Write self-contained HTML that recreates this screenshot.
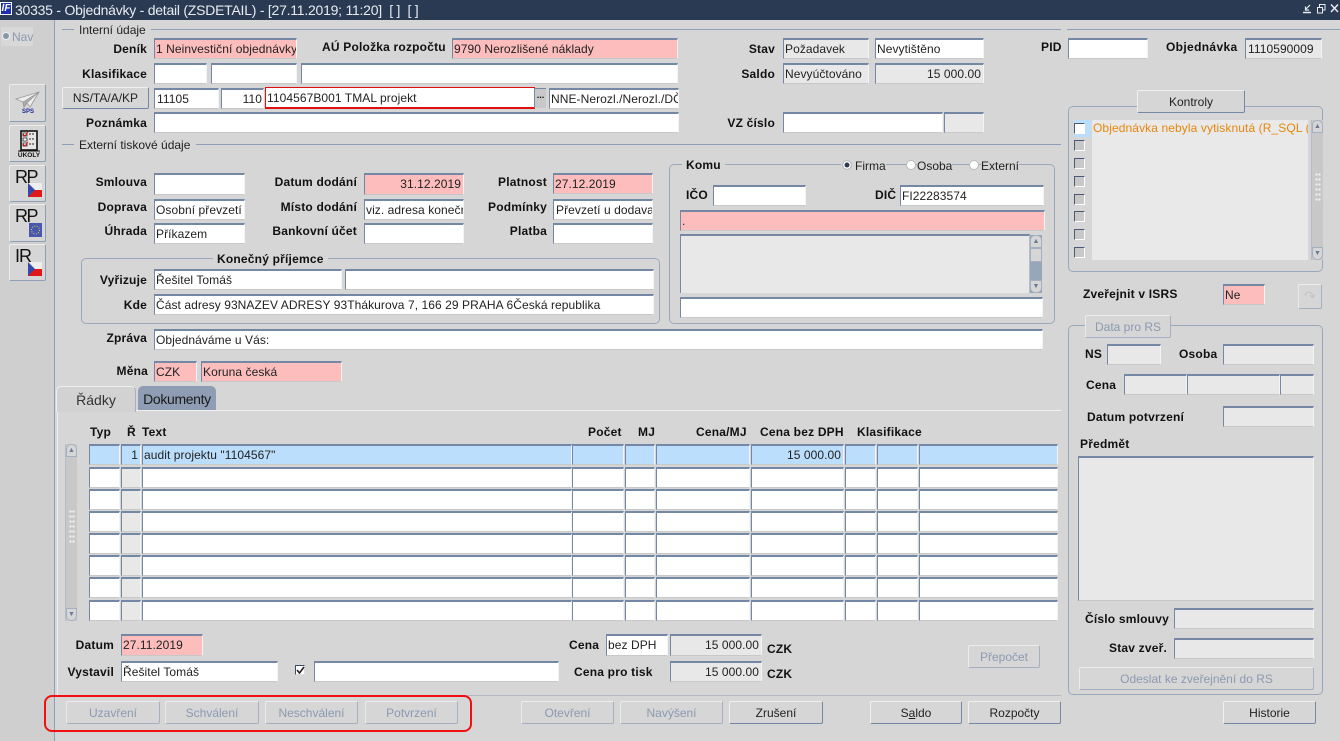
<!DOCTYPE html>
<html lang="cs"><head><meta charset="utf-8"><title>Objednávky</title>
<style>
html,body{margin:0;padding:0}
body{position:relative;width:1340px;height:741px;overflow:hidden;background:#d6d6d6;font:12px "Liberation Sans",sans-serif;color:#111}
body div,body span.a{position:absolute;box-sizing:border-box;white-space:nowrap}
.f{border:1px solid;border-color:#7488a6 #f4f4f4 #c8c8c8 #7488a6;border-top-width:2px;background:#fff;overflow:hidden;padding:0 2px 0 1px;height:21px;line-height:18px;font-size:12px;color:#222;letter-spacing:.07px}
.p{background:#fdbdbd}.g{background:#e8e8e8}.b{background:#bbdefc}.n{text-align:right}
.l{font-weight:bold;font-size:12px;color:#111;line-height:14px;letter-spacing:.2px}
.r{left:0;text-align:right}
.btn{border:1px solid;border-color:#f0f0f0 #7488a6 #7488a6 #f0f0f0;border-radius:2px;background:#d6d6d6;text-align:center;font-size:12px;color:#222;line-height:22px;height:23px}
.d{color:#8b9ab0;border-color:#ececec #a4b0c2 #a4b0c2 #ececec}
.ln{height:1px;background:#8e9eb6}
.fs{border:1px solid #9aa8bc;border-radius:5px}
.bg{background:#d6d6d6;padding:0 4px}
.ic{left:9px;width:37px;border:1px solid;border-color:#ececec #8e9eb6 #8e9eb6 #ececec;border-radius:2px;background:#d6d6d6}
.ck{left:1074px;width:11px;height:11px;border:1px solid;border-color:#4a5a74 #fff #fff #4a5a74;background:#c8c8c8}
.rd{width:10px;height:10px;border-radius:50%;background:#fff;border:1px solid #bbb;top:160px}
.sb{background:#c8c8c8;border-left:1px solid #b4bcc8}
.h{top:425px}
.up,.dn{left:0;height:13px;background:#d6d6d6;border:1px solid #a4b0c2;color:#6a7a94;font-size:7px;line-height:11px;text-align:center}
.up{top:0;border-radius:5px 5px 0 0}.dn{border-radius:0 0 5px 5px}
.grip{left:3px;width:6px;background-image:radial-gradient(circle,#f2f2f2 0 1px,transparent 1.300px);background-size:3px 5px}
</style></head><body>

<!-- title bar -->
<div style="left:0;top:0;width:1340px;height:20px;background:#2a3a52"></div>
<div style="left:0;top:2px;width:12px;height:13px;background:#1c2fb0;border:1px solid #fff;color:#fff;font:italic bold 10px/11px 'Liberation Sans',sans-serif;text-align:center;overflow:hidden">ÍF</div>
<div style="left:15px;top:1px;color:#e8ecf2;font-size:14px;line-height:18px;letter-spacing:-.24px">30335 - Objednávky - detail (ZSDETAIL) - [27.11.2019; 11:20]&nbsp; [ ]&nbsp; [ ]</div>
<svg style="position:absolute;left:1302px;top:2px" width="38" height="12" viewBox="0 0 38 12" fill="none" stroke="#e8ecf2"><path d="M1 10.500h8" stroke-width="1.500"/><path d="M8 3L4 7M3.500 4.500V8H7" stroke-width="1.200"/><path d="M15.500 5.500h5v5.500h-5z"/><path d="M17.500 5V2.500h5.500V8h-2.500"/><path d="M29 2.500l7 7.500M36 2.500l-7 7.500" stroke-width="1.500"/></svg>

<!-- left bar -->
<div style="left:0;top:20px;width:54px;height:721px;background:#cfcfcf"></div>
<div style="left:54px;top:20px;width:1px;height:721px;background:#8e9eb6"></div>
<div style="left:1px;top:27px;width:32px;height:19px;background:#d8d8d8"></div>
<div style="left:2px;top:32px;width:8px;height:8px;border-radius:50%;background:#8896a8;border:1px solid #eee"></div>
<div style="left:12px;top:29px;color:#8b9ab0;font-size:12px;line-height:16px">Nav</div>

<div class="ic" style="top:84px;height:38px"><svg style="position:absolute;left:5px;top:5px" width="26" height="28" viewBox="0 0 26 28"><path d="M1 9L24 2 15 17 12 13 9 17 8 12z" fill="#eee" stroke="#999" stroke-width=".8"/><path d="M8 12L24 2 12 13 9 17z" fill="#aaa" stroke="#888" stroke-width=".5"/><text x="13" y="23" font-family="Liberation Sans" font-size="6" font-weight="bold" fill="#1c2a90" text-anchor="middle">SPS</text></svg></div>
<div class="ic" style="top:125px;height:37px"><svg style="position:absolute;left:5px;top:3px" width="28" height="30" viewBox="0 0 28 30"><rect x="6" y="2" width="16" height="19" fill="#e6e6e6" stroke="#111" stroke-width="1.600"/><path d="M8 4h4v3H8zM8 9h4v3H8zM8 14h4v3H8z" fill="#fff" stroke="#222" stroke-width=".8"/><path d="M8 5l2 2 3-4M8 15l2 2 3-4" stroke="#d11" fill="none"/><path d="M14 5h6M14 10h6M14 15h6" stroke="#222" stroke-dasharray="2 1"/><path d="M3 22h22" stroke="#111"/><text x="14" y="28" font-family="Liberation Sans" font-size="6.500" font-weight="bold" fill="#111" text-anchor="middle">ÚKOLY</text></svg></div>
<div class="ic" style="top:165px;height:37px"><span class="a" style="left:5px;top:1px;font-size:18px;line-height:20px;color:#111;letter-spacing:-1.500px">RP</span><svg style="position:absolute;left:18px;top:17px" width="14" height="14"><rect width="14" height="7" fill="#eee"/><rect y="7" width="14" height="7" fill="#e01818"/><path d="M0 0L7 7 0 14z" fill="#3848a8"/></svg></div>
<div class="ic" style="top:204px;height:38px"><span class="a" style="left:5px;top:1px;font-size:18px;line-height:20px;color:#111;letter-spacing:-1.500px">RP</span><svg style="position:absolute;left:19px;top:18px" width="13" height="14"><rect width="13" height="14" fill="#4858b0"/><circle cx="6.500" cy="7" r="4" fill="none" stroke="#e8d838" stroke-dasharray="1 1.500"/></svg></div>
<div class="ic" style="top:244px;height:37px"><span class="a" style="left:5px;top:1px;font-size:18px;line-height:20px;color:#111;letter-spacing:-1px">IR</span><svg style="position:absolute;left:18px;top:17px" width="14" height="14"><rect width="14" height="7" fill="#eee"/><rect y="7" width="14" height="7" fill="#e01818"/><path d="M0 0L7 7 0 14z" fill="#3848a8"/></svg></div>

<!-- section lines -->
<div class="ln" style="left:62px;top:29px;width:12px"></div>
<div style="left:79px;top:23px;line-height:14px;color:#222">Interní údaje</div>
<div class="ln" style="left:151px;top:29px;width:910px"></div>
<div class="ln" style="left:1067px;top:29px;width:273px"></div>
<div class="ln" style="left:62px;top:144px;width:12px"></div>
<div style="left:79px;top:138px;line-height:14px;color:#222">Externí tiskové údaje</div>
<div class="ln" style="left:196px;top:144px;width:865px"></div>

<!-- interní -->
<div class="l r" style="top:42px;width:147px">Deník</div>
<div class="f p" style="left:154px;top:38px;width:143px">1 Neinvestiční objednávky</div>
<div class="l" style="left:322px;top:40px">AÚ Položka rozpočtu</div>
<div class="f p" style="left:452px;top:38px;width:226px">9790 Nerozlišené náklady</div>
<div class="l r" style="top:67px;width:147px">Klasifikace</div>
<div class="f" style="left:154px;top:63px;width:53px"></div>
<div class="f" style="left:211px;top:63px;width:86px"></div>
<div class="f" style="left:301px;top:63px;width:377px"></div>
<div class="btn" style="left:62px;top:87px;width:87px;height:22px;line-height:21px">NS/TA/A/KP</div>
<div class="f" style="left:154px;top:88px;width:65px;padding-left:2px">11105</div>
<div class="f n" style="left:221px;top:88px;width:43px;padding-right:1px">110</div>
<div class="f" style="left:265px;top:87px;width:270px;height:22px;border:1px solid #e01010;border-right:0;border-bottom-width:2px;line-height:21px">1104567B001 TMAL projekt</div>
<div style="left:534px;top:88px;width:12px;height:20px;background:#c8c8c8;border-left:1px solid #7488a6;border-top:1px solid #7488a6;text-align:center;font:bold 9px/12px 'Liberation Sans',sans-serif">...</div>
<div class="f" style="left:549px;top:88px;width:130px">NNE-Nerozl./Nerozl./DČ-</div>
<div class="l r" style="top:116px;width:147px">Poznámka</div>
<div class="f" style="left:154px;top:112px;width:525px"></div>

<div class="l r" style="top:42px;width:775px">Stav</div>
<div class="f g" style="left:783px;top:38px;width:86px">Požadavek</div>
<div class="f" style="left:875px;top:38px;width:109px">Nevytištěno</div>
<div class="l r" style="top:67px;width:775px">Saldo</div>
<div class="f g" style="left:783px;top:63px;width:86px">Nevyúčtováno</div>
<div class="f g n" style="left:875px;top:63px;width:109px">15 000.00</div>
<div class="l r" style="top:116px;width:775px">VZ číslo</div>
<div class="f" style="left:783px;top:112px;width:160px"></div>
<div class="f g" style="left:944px;top:112px;width:40px"></div>
<div class="l" style="left:1041px;top:40px">PID</div>
<div class="f" style="left:1068px;top:38px;width:80px"></div>
<div class="l" style="left:1166px;top:40px;letter-spacing:.35px">Objednávka</div>
<div class="f g" style="left:1245px;top:38px;width:77px;padding:0 1px 0 2px">1110590009</div>

<!-- kontroly -->
<div class="fs" style="left:1068px;top:106px;width:255px;height:166px"></div>
<div class="btn" style="left:1137px;top:90px;width:108px;height:23px">Kontroly</div>
<div style="left:1074px;top:120px;width:17px;height:17px;background:#bbdefc"></div>
<div class="ck" style="top:123px;background:#fff"></div>
<div class="ck" style="top:140px"></div><div class="ck" style="top:158px"></div><div class="ck" style="top:176px"></div><div class="ck" style="top:194px"></div><div class="ck" style="top:211px"></div><div class="ck" style="top:229px"></div><div class="ck" style="top:247px"></div>
<div style="left:1092px;top:120px;width:216px;height:140px;background:#e9e9e9;color:#e8860c;padding-left:1px;line-height:17px;overflow:hidden;letter-spacing:.1px">Objednávka nebyla vytisknutá (R_SQL (</div>
<div class="sb" style="left:1311px;top:120px;width:12px;height:140px"><div class="up" style="width:11px">▲</div><div class="dn" style="width:11px;top:127px">▼</div><div class="grip" style="top:52px;height:30px"></div></div>

<!-- externí -->
<div class="l r" style="top:175px;width:147px">Smlouva</div>
<div class="f" style="left:154px;top:173px;width:91px;height:22px"></div>
<div class="l r" style="top:200px;width:147px">Doprava</div>
<div class="f" style="left:154px;top:199px;width:91px">Osobní převzetí</div>
<div class="l r" style="top:224px;width:147px">Úhrada</div>
<div class="f" style="left:154px;top:223px;width:91px">Příkazem</div>
<div class="l r" style="top:175px;width:357px">Datum dodání</div>
<div class="f p n" style="left:364px;top:173px;width:100px;height:22px;padding-right:2px">31.12.2019</div>
<div class="l r" style="top:200px;width:357px">Místo dodání</div>
<div class="f" style="left:364px;top:199px;width:100px;padding:0 0 0 1px">viz. adresa konečr</div>
<div class="l r" style="top:224px;width:357px">Bankovní účet</div>
<div class="f" style="left:364px;top:223px;width:100px"></div>
<div class="l r" style="top:175px;width:547px">Platnost</div>
<div class="f p" style="left:553px;top:173px;width:100px">27.12.2019</div>
<div class="l r" style="top:200px;width:547px">Podmínky</div>
<div class="f" style="left:553px;top:199px;width:100px;padding:0 0 0 2px">Převzetí u dodava</div>
<div class="l r" style="top:224px;width:547px">Platba</div>
<div class="f" style="left:553px;top:223px;width:100px"></div>

<div class="fs" style="left:81px;top:258px;width:579px;height:66px"></div>
<div class="l bg" style="left:213px;top:252px">Konečný příjemce</div>
<div class="l r" style="top:273px;width:147px">Vyřizuje</div>
<div class="f" style="left:154px;top:269px;width:188px">Řešitel Tomáš</div>
<div class="f" style="left:345px;top:269px;width:309px"></div>
<div class="l r" style="top:298px;width:147px">Kde</div>
<div class="f" style="left:154px;top:294px;width:500px">Část adresy 93NAZEV ADRESY 93Thákurova 7, 166 29 PRAHA 6Česká republika</div>

<!-- komu -->
<div class="fs" style="left:669px;top:164px;width:386px;height:160px"></div>
<div class="l bg" style="left:682px;top:158px">Komu</div>
<div class="bg" style="left:841px;top:158px;padding:0 1px;width:45px;height:14px"></div>
<div class="rd" style="left:842px;background:#2a3a52;box-shadow:inset 0 0 0 1.500px #fff"></div>
<div style="left:855px;top:159px;line-height:14px;color:#222;background:#d6d6d6">Firma</div>
<div class="rd" style="left:906px"></div>
<div style="left:917px;top:159px;line-height:14px;color:#222;background:#d6d6d6">Osoba</div>
<div class="rd" style="left:969px"></div>
<div style="left:981px;top:159px;line-height:14px;color:#222;background:#d6d6d6">Externí</div>
<div class="l" style="left:686px;top:188px">IČO</div>
<div class="f" style="left:713px;top:185px;width:93px"></div>
<div class="l" style="left:875px;top:188px">DIČ</div>
<div class="f" style="left:900px;top:185px;width:144px">FI22283574</div>
<div class="f p" style="left:680px;top:210px;width:365px;font-size:12px;padding-left:1px">.</div>
<div class="f g" style="left:680px;top:234px;width:350px;height:59px;border-right:0;border-bottom:0"></div>
<div class="sb" style="left:1029px;top:235px;width:13px;height:58px;background:#98a6ba"><div class="up" style="width:12px">▲</div><div style="left:0;top:13px;width:12px;height:14px;background:#d6d6d6;border:1px solid #a4b0c2"></div><div class="dn" style="width:12px;top:45px">▼</div></div>
<div class="f" style="left:680px;top:297px;width:363px"></div>

<div class="l r" style="top:331px;width:147px">Zpráva</div>
<div class="f" style="left:154px;top:329px;width:889px">Objednáváme u Vás:</div>
<div class="l r" style="top:364px;width:148px">Měna</div>
<div class="f p" style="left:154px;top:361px;width:43px">CZK</div>
<div class="f p" style="left:201px;top:361px;width:141px">Koruna česká</div>

<!-- tabs -->
<div style="left:57px;top:410px;width:1004px;height:1px;background:#f0f0f0"></div>
<div style="left:57px;top:410px;width:1px;height:285px;background:#f0f0f0"></div>
<div style="left:56px;top:386px;width:80px;height:26px;background:#d2d2d2;border:1px solid #efefef;border-bottom:0;border-right-color:#a4b0c2;border-radius:5px 5px 0 0;text-align:center;font-size:14px;line-height:26px;color:#333">Řádky</div>
<div style="left:138px;top:386px;width:78px;height:24px;background:#8e9db3;border-radius:5px 5px 0 0;text-align:center;font-size:14px;line-height:26px;color:#1a1a1a;letter-spacing:-.35px">Dokumenty</div>

<!-- table header -->
<div class="l h" style="left:90px">Typ</div><div class="l h" style="left:127px">Ř</div><div class="l h" style="left:142px">Text</div>
<div class="l h" style="left:588px">Počet</div><div class="l h" style="left:638px">MJ</div><div class="l h" style="left:696px">Cena/MJ</div><div class="l h" style="left:760px">Cena bez DPH</div><div class="l h" style="left:857px">Klasifikace</div>

<!-- table rows -->
<div class="f b" style="left:89px;top:444px;width:31px"></div><div class="f b n" style="left:121px;top:444px;width:20px">1</div><div class="f b" style="left:142px;top:444px;width:430px">audit projektu "1104567"</div><div class="f b" style="left:572px;top:444px;width:52px"></div><div class="f b" style="left:625px;top:444px;width:30px"></div><div class="f b" style="left:656px;top:444px;width:94px"></div><div class="f b n" style="left:751px;top:444px;width:93px">15 000.00</div><div class="f b" style="left:845px;top:444px;width:31px"></div><div class="f b" style="left:877px;top:444px;width:41px"></div><div class="f b" style="left:919px;top:444px;width:139px"></div>

<div class="f" style="left:89px;top:467px;width:31px"></div><div class="f g" style="left:121px;top:467px;width:20px"></div><div class="f" style="left:142px;top:467px;width:430px"></div><div class="f" style="left:572px;top:467px;width:52px"></div><div class="f" style="left:625px;top:467px;width:30px"></div><div class="f" style="left:656px;top:467px;width:94px"></div><div class="f" style="left:751px;top:467px;width:93px"></div><div class="f" style="left:845px;top:467px;width:31px"></div><div class="f" style="left:877px;top:467px;width:41px"></div><div class="f" style="left:919px;top:467px;width:139px"></div>

<div class="f" style="left:89px;top:489px;width:31px"></div><div class="f g" style="left:121px;top:489px;width:20px"></div><div class="f" style="left:142px;top:489px;width:430px"></div><div class="f" style="left:572px;top:489px;width:52px"></div><div class="f" style="left:625px;top:489px;width:30px"></div><div class="f" style="left:656px;top:489px;width:94px"></div><div class="f" style="left:751px;top:489px;width:93px"></div><div class="f" style="left:845px;top:489px;width:31px"></div><div class="f" style="left:877px;top:489px;width:41px"></div><div class="f" style="left:919px;top:489px;width:139px"></div>

<div class="f" style="left:89px;top:511px;width:31px"></div><div class="f g" style="left:121px;top:511px;width:20px"></div><div class="f" style="left:142px;top:511px;width:430px"></div><div class="f" style="left:572px;top:511px;width:52px"></div><div class="f" style="left:625px;top:511px;width:30px"></div><div class="f" style="left:656px;top:511px;width:94px"></div><div class="f" style="left:751px;top:511px;width:93px"></div><div class="f" style="left:845px;top:511px;width:31px"></div><div class="f" style="left:877px;top:511px;width:41px"></div><div class="f" style="left:919px;top:511px;width:139px"></div>

<div class="f" style="left:89px;top:533px;width:31px"></div><div class="f g" style="left:121px;top:533px;width:20px"></div><div class="f" style="left:142px;top:533px;width:430px"></div><div class="f" style="left:572px;top:533px;width:52px"></div><div class="f" style="left:625px;top:533px;width:30px"></div><div class="f" style="left:656px;top:533px;width:94px"></div><div class="f" style="left:751px;top:533px;width:93px"></div><div class="f" style="left:845px;top:533px;width:31px"></div><div class="f" style="left:877px;top:533px;width:41px"></div><div class="f" style="left:919px;top:533px;width:139px"></div>

<div class="f" style="left:89px;top:555px;width:31px"></div><div class="f g" style="left:121px;top:555px;width:20px"></div><div class="f" style="left:142px;top:555px;width:430px"></div><div class="f" style="left:572px;top:555px;width:52px"></div><div class="f" style="left:625px;top:555px;width:30px"></div><div class="f" style="left:656px;top:555px;width:94px"></div><div class="f" style="left:751px;top:555px;width:93px"></div><div class="f" style="left:845px;top:555px;width:31px"></div><div class="f" style="left:877px;top:555px;width:41px"></div><div class="f" style="left:919px;top:555px;width:139px"></div>

<div class="f" style="left:89px;top:577px;width:31px"></div><div class="f g" style="left:121px;top:577px;width:20px"></div><div class="f" style="left:142px;top:577px;width:430px"></div><div class="f" style="left:572px;top:577px;width:52px"></div><div class="f" style="left:625px;top:577px;width:30px"></div><div class="f" style="left:656px;top:577px;width:94px"></div><div class="f" style="left:751px;top:577px;width:93px"></div><div class="f" style="left:845px;top:577px;width:31px"></div><div class="f" style="left:877px;top:577px;width:41px"></div><div class="f" style="left:919px;top:577px;width:139px"></div>

<div class="f" style="left:89px;top:600px;width:31px"></div><div class="f g" style="left:121px;top:600px;width:20px"></div><div class="f" style="left:142px;top:600px;width:430px"></div><div class="f" style="left:572px;top:600px;width:52px"></div><div class="f" style="left:625px;top:600px;width:30px"></div><div class="f" style="left:656px;top:600px;width:94px"></div><div class="f" style="left:751px;top:600px;width:93px"></div><div class="f" style="left:845px;top:600px;width:31px"></div><div class="f" style="left:877px;top:600px;width:41px"></div><div class="f" style="left:919px;top:600px;width:139px"></div>

<!-- table scrollbar -->
<div class="sb" style="left:65px;top:444px;width:12px;height:177px"><div class="up" style="width:11px">▲</div><div class="dn" style="width:11px;top:164px">▼</div><div class="grip" style="top:65px;height:36px"></div></div>

<!-- bottom fields -->
<div class="l r" style="top:638px;width:114px">Datum</div>
<div class="f p" style="left:121px;top:634px;width:82px;height:22px">27.11.2019</div>
<div class="l r" style="top:665px;width:114px">Vystavil</div>
<div class="f" style="left:121px;top:661px;width:157px">Řešitel Tomáš</div>
<div style="left:295px;top:665px;width:10px;height:10px;background:#fff;border:1px solid;border-color:#3a4a64 #ddd #ddd #3a4a64"><svg style="position:absolute;left:0;top:0" width="9" height="9"><path d="M1 4l2.500 3L8 1" stroke="#222" stroke-width="1.600" fill="none"/></svg></div>
<div class="f" style="left:314px;top:661px;width:245px"></div>
<div class="l" style="left:569px;top:638px">Cena</div>
<div class="f" style="left:606px;top:634px;width:62px;height:22px;padding:0 1px">bez DPH</div>
<div class="f g n" style="left:670px;top:634px;width:92px;height:22px">15 000.00</div>
<div class="l" style="left:767px;top:642px">CZK</div>
<div class="l" style="left:574px;top:665px">Cena pro tisk</div>
<div class="f g n" style="left:670px;top:661px;width:92px">15 000.00</div>
<div class="l" style="left:767px;top:667px">CZK</div>
<div class="btn d" style="left:968px;top:645px;width:72px">Přepočet</div>

<div style="left:57px;top:695px;width:1004px;height:1px;background:#b4b8c0"></div>

<!-- bottom buttons -->
<div class="btn d" style="left:66px;top:701px;width:94px">Uzavření</div>
<div class="btn d" style="left:165px;top:701px;width:94px">Schválení</div>
<div class="btn d" style="left:265px;top:701px;width:93px">Neschválení</div>
<div class="btn d" style="left:365px;top:701px;width:93px">Potvrzení</div>
<div style="left:44px;top:695px;width:428px;height:37px;border:2px solid #f01010;border-radius:8px"></div>
<div class="btn d" style="left:521px;top:701px;width:93px">Otevření</div>
<div class="btn d" style="left:620px;top:701px;width:103px">Navýšení</div>
<div class="btn" style="left:729px;top:701px;width:94px">Zrušení</div>
<div class="btn" style="left:870px;top:701px;width:92px">S<u>a</u>ldo</div>
<div class="btn" style="left:968px;top:701px;width:93px">Rozpočty</div>
<div class="btn" style="left:1223px;top:701px;width:93px">Historie</div>

<!-- right lower -->
<div class="l" style="left:1083px;top:287px">Zveřejnit v ISRS</div>
<div class="f p" style="left:1223px;top:284px;width:42px;padding:0 1px">Ne</div>
<div class="btn d" style="left:1298px;top:284px;width:24px;height:25px;color:#c4c4c4;line-height:22px;font-size:14px">↷</div>

<div class="fs" style="left:1068px;top:325px;width:255px;height:370px"></div>
<div class="btn d" style="left:1085px;top:315px;width:86px;height:23px;font-size:12px">Data pro RS</div>
<div class="l" style="left:1085px;top:347px">NS</div>
<div class="f g" style="left:1107px;top:344px;width:54px"></div>
<div class="l" style="left:1179px;top:347px">Osoba</div>
<div class="f g" style="left:1223px;top:344px;width:91px"></div>
<div class="l" style="left:1086px;top:378px">Cena</div>
<div class="f g" style="left:1124px;top:374px;width:63px"></div>
<div class="f g" style="left:1187px;top:374px;width:93px"></div>
<div class="f g" style="left:1280px;top:374px;width:34px"></div>
<div class="l" style="left:1087px;top:410px">Datum potvrzení</div>
<div class="f g" style="left:1223px;top:406px;width:91px"></div>
<div class="l" style="left:1080px;top:437px">Předmět</div>
<div class="f g" style="left:1078px;top:456px;width:236px;height:145px"></div>
<div class="l" style="left:1085px;top:612px">Číslo smlouvy</div>
<div class="f g" style="left:1174px;top:608px;width:140px"></div>
<div class="l" style="left:1109px;top:641px">Stav zveř.</div>
<div class="f g" style="left:1174px;top:638px;width:140px"></div>
<div class="btn d" style="left:1079px;top:667px;width:235px">Odeslat ke zveřejnění do RS</div>

</body></html>
